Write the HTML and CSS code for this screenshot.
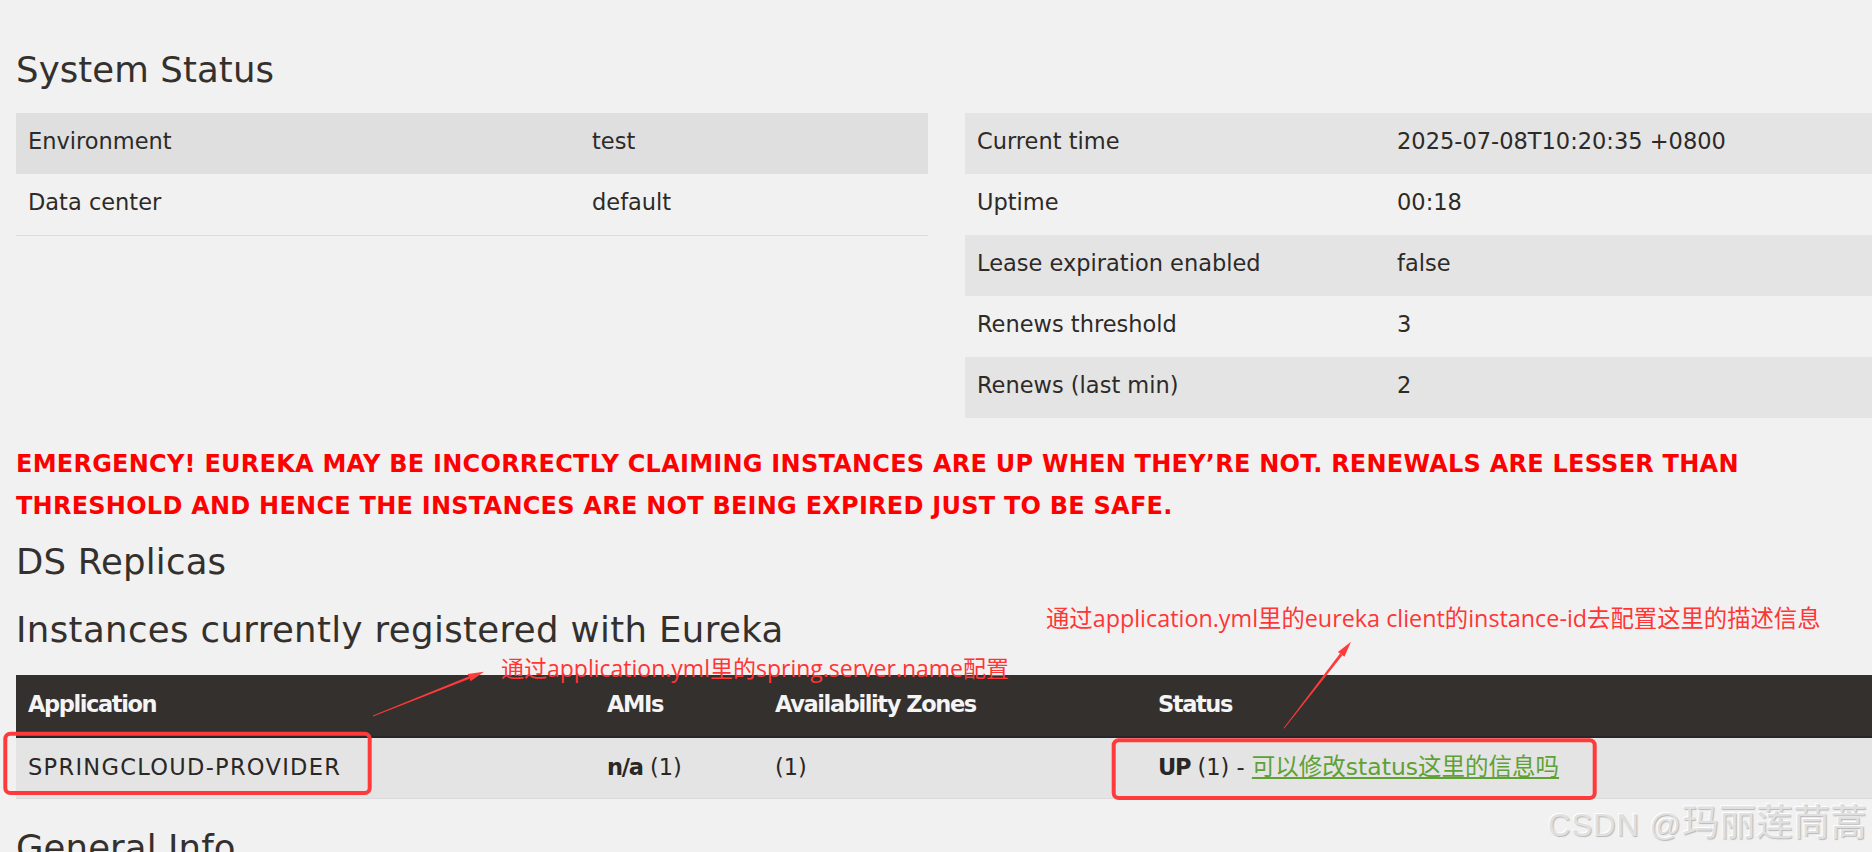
FILE: index.html
```html
<!DOCTYPE html>
<html lang="en">
<head>
<meta charset="utf-8">
<title>Eureka</title>
<link rel="stylesheet" href="styles.css">
</head>
<body>
<div class="page">
  <h1 class="title first">System Status</h1>
  <div class="status-grid">
    <table class="info info-left">
      <colgroup><col class="cl1"><col></colgroup>
      <tbody>
        <tr class="shade"><td>Environment</td><td>test</td></tr>
        <tr><td>Data center</td><td>default</td></tr>
      </tbody>
    </table>
    <table class="info info-right">
      <colgroup><col class="cr1"><col></colgroup>
      <tbody>
        <tr class="shade"><td>Current time</td><td>2025-07-08T10:20:35 +0800</td></tr>
        <tr><td>Uptime</td><td>00:18</td></tr>
        <tr class="shade"><td>Lease expiration enabled</td><td>false</td></tr>
        <tr><td>Renews threshold</td><td>3</td></tr>
        <tr class="shade"><td>Renews (last min)</td><td>2</td></tr>
      </tbody>
    </table>
  </div>
  <h4 class="emergency">EMERGENCY! EUREKA MAY BE INCORRECTLY CLAIMING INSTANCES ARE UP WHEN THEY’RE NOT. RENEWALS ARE LESSER THAN THRESHOLD AND HENCE THE INSTANCES ARE NOT BEING EXPIRED JUST TO BE SAFE.</h4>
  <h1 class="title ds">DS Replicas</h1>
  <h1 class="title inst">Instances currently registered with Eureka</h1>
  <table class="apps">
    <colgroup><col class="ca1"><col class="ca2"><col class="ca3"><col></colgroup>
    <thead>
      <tr><th>Application</th><th>AMIs</th><th>Availability Zones</th><th>Status</th></tr>
    </thead>
    <tbody>
      <tr><td><span class="app-name">SPRINGCLOUD-PROVIDER</span></td><td><b>n/a</b> (1)</td><td>(1)</td><td><b>UP</b> (1) - <a class="inst-link" href="#">可以修改status这里的信息吗</a></td></tr>
    </tbody>
  </table>
  <h1 class="title general">General Info</h1>
</div>

<div class="note note-name">通过application.yml里的spring.server.name配置</div>
<div class="note note-id">通过application.yml里的eureka client的instance-id去配置这里的描述信息</div>

<svg class="marks" width="1872" height="852" viewBox="0 0 1872 852" xmlns="http://www.w3.org/2000/svg">
  <rect x="5.3" y="733.7" width="364.4" height="59.3" rx="5" ry="5" fill="none" stroke="#ff3a3a" stroke-width="4"/>
  <rect x="1113.7" y="740.3" width="481" height="57.7" rx="5" ry="5" fill="none" stroke="#ff3a3a" stroke-width="4"/>
  <polygon points="373,716.4 469.6,678.8 468.6,676.4 373,715.6" fill="#ff3a3a"/>
  <polygon points="484,671.7 470.6,681.3 467.7,673.9" fill="#ff3a3a"/>
  <polygon points="1284.3,728.5 1342.4,655.2 1340.0,653.6 1283.7,728.1" fill="#ff3a3a"/>
  <polygon points="1351,641.7 1344.4,656.8 1338.0,651.9" fill="#ff3a3a"/>
</svg>

<div class="watermark"><span class="wm-lat">CSDN @</span><span class="wm-cjk">玛丽莲茼蒿</span></div>
</body>
</html>
```
FILE: styles.css
```css
html, body {
  margin: 0;
  padding: 0;
  background: #f1f1f1;
  overflow: hidden;
}

body {
  position: relative;
  width: 1872px;
  height: 852px;
  font-family: "DejaVu Sans", "Noto Sans CJK SC", sans-serif;
  font-size: 22.5px;
  color: #34302d;
}

.page {
  width: 1862px;
  padding: 50px 0 0 16px;
}

.title {
  margin: 0;
  font-size: 35.5px;
  line-height: 40px;
  font-weight: normal;
  letter-spacing: 0.1px;
  color: #34302d;
}

.first { margin-bottom: 23px; }
.ds { margin-top: 15px; letter-spacing: 0.2px; }
.inst { margin-top: 28px; letter-spacing: 0.38px; }
.general { margin-top: 29px; }

.status-grid {
  display: grid;
  grid-template-columns: 912px 913px;
  column-gap: 37px;
  align-items: start;
}

table {
  border-collapse: collapse;
  table-layout: fixed;
  width: 100%;
}

.info td {
  padding: 15px 12px 20px;
  line-height: 26px;
  white-space: nowrap;
  color: #2d2a28;
}

.info-left { border-bottom: 1px solid #dcdcdc; }
.info-left .shade td { background: #dfdfdf; }
.info-right .shade td { background: #e4e4e4; }
.cl1 { width: 564px; }
.cr1 { width: 420px; }

.emergency {
  margin: 26px 0 0;
  font-size: 24px;
  line-height: 41.7px;
  font-weight: bold;
  color: #ff0000;
  letter-spacing: 0.25px;
}

.apps { margin-top: 25px; }
.ca1 { width: 579px; }
.ca2 { width: 168px; }
.ca3 { width: 383px; }

.apps th {
  padding: 16px 12px 19px;
  line-height: 26px;
  text-align: left;
  font-weight: bold;
  letter-spacing: -1.4px;
  color: #f4f4f4;
  background: #34302d;
  border-bottom: 2px solid #25272a;
}

.apps td {
  padding: 16px 12px 18px;
  line-height: 26px;
  background: #e4e4e4;
  border-bottom: 1px solid #dadada;
  white-space: nowrap;
  color: #2a2725;
}

.apps b { letter-spacing: -1.2px; }
.app-name { letter-spacing: 1.3px; }

.inst-link {
  font-size: 23.5px;
  color: #5fa134;
  text-decoration: underline;
}

.note {
  position: absolute;
  font-family: "Open Sans", "Noto Sans CJK SC", sans-serif;
  font-size: 23px;
  line-height: 30px;
  color: #ff3636;
  white-space: nowrap;
}

.note-name { left: 501px; top: 653px; }
.note-id { left: 1046px; top: 603px; font-size: 23.35px; }

.marks {
  position: absolute;
  left: 0;
  top: 0;
  pointer-events: none;
}

.watermark {
  position: absolute;
  left: 1548px;
  top: 797px;
  line-height: 46px;
  color: #e0e0e0;
  text-shadow: 1px 1px 1px #b8b8b8, -1px -1px 0 #ffffff;
  white-space: nowrap;
}

.wm-lat {
  font-family: "Liberation Sans", sans-serif;
  font-size: 31px;
  letter-spacing: 1px;
}

.wm-cjk {
  font-family: "Noto Sans CJK SC", sans-serif;
  font-size: 37px;
}
```
